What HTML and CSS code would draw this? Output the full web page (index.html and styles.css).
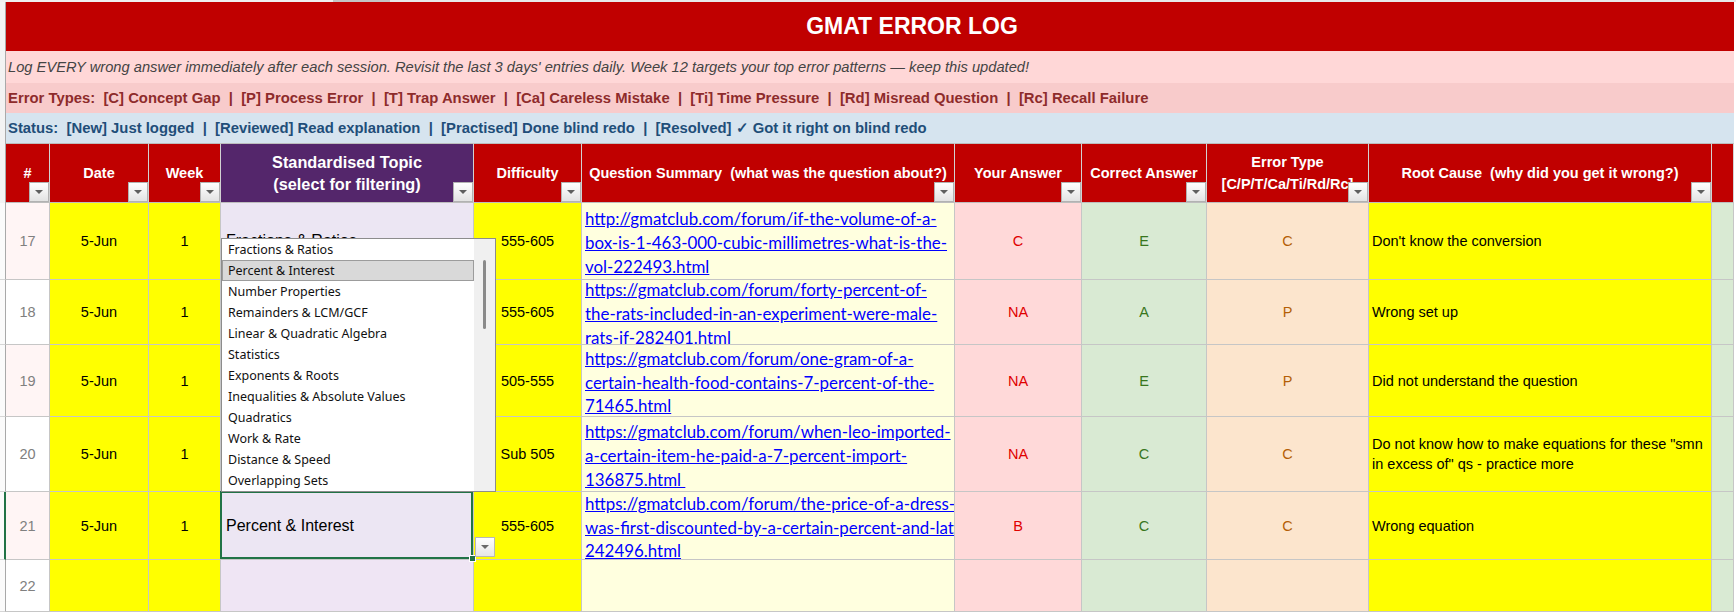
FILE: index.html
```html
<!DOCTYPE html>
<html lang="en">
<head>
<meta charset="utf-8">
<title>GMAT Error Log</title>
<link rel="stylesheet" href="styles.css">
</head>
<body>
<div class="ribbon-edge"></div>
<div class="sheet">
  <!-- banner rows -->
  <div class="gutter gutter-bands"></div>
  <div class="title">GMAT ERROR LOG</div>
  <div class="band band-note">Log EVERY wrong answer immediately after each session. Revisit the last 3 days' entries daily. Week 12 targets your top error patterns — keep this updated!</div>
  <div class="band band-types">Error Types:  [C] Concept Gap  |  [P] Process Error  |  [T] Trap Answer  |  [Ca] Careless Mistake  |  [Ti] Time Pressure  |  [Rd] Misread Question  |  [Rc] Recall Failure</div>
  <div class="band band-status">Status:  [New] Just logged  |  [Reviewed] Read explanation  |  [Practised] Done blind redo  |  [Resolved] ✓ Got it right on blind redo</div>

  <!-- column headers -->
  <div class="gutter"></div>
  <div class="th">#<span class="filter"></span></div>
  <div class="th">Date<span class="filter"></span></div>
  <div class="th">Week<span class="filter"></span></div>
  <div class="th th-topic">Standardised Topic<br>(select for filtering)<span class="filter"></span></div>
  <div class="th">Difficulty<span class="filter"></span></div>
  <div class="th">Question Summary  (what was the question about?)<span class="filter"></span></div>
  <div class="th">Your Answer<span class="filter"></span></div>
  <div class="th">Correct Answer<span class="filter"></span></div>
  <div class="th">Error Type<br>[C/P/T/Ca/Ti/Rd/Rc]<span class="filter"></span></div>
  <div class="th">Root Cause  (why did you get it wrong?)<span class="filter"></span></div>
  <div class="th"></div>

  <!-- row 17 -->
  <div class="gutter gutter-row"></div>
  <div class="td num num-alt">17</div>
  <div class="td yel">5-Jun</div>
  <div class="td yel">1</div>
  <div class="td topic">Fractions &amp; Ratios</div>
  <div class="td yel">555-605</div>
  <div class="td link"><a href="#">http://gmatclub.com/forum/if-the-volume-of-a-<br>box-is-1-463-000-cubic-millimetres-what-is-the-<br>vol-222493.html</a></div>
  <div class="td mine">C</div>
  <div class="td right">E</div>
  <div class="td etype">C</div>
  <div class="td cause">Don't know the conversion</div>
  <div class="td pad"></div>

  <!-- row 18 -->
  <div class="gutter gutter-row"></div>
  <div class="td num">18</div>
  <div class="td yel">5-Jun</div>
  <div class="td yel">1</div>
  <div class="td topic"></div>
  <div class="td yel">555-605</div>
  <div class="td link"><a href="#">https://gmatclub.com/forum/forty-percent-of-<br>the-rats-included-in-an-experiment-were-male-<br>rats-if-282401.html</a></div>
  <div class="td mine">NA</div>
  <div class="td right">A</div>
  <div class="td etype">P</div>
  <div class="td cause">Wrong set up</div>
  <div class="td pad"></div>

  <!-- row 19 -->
  <div class="gutter gutter-row"></div>
  <div class="td num num-alt">19</div>
  <div class="td yel">5-Jun</div>
  <div class="td yel">1</div>
  <div class="td topic"></div>
  <div class="td yel">505-555</div>
  <div class="td link"><a href="#">https://gmatclub.com/forum/one-gram-of-a-<br>certain-health-food-contains-7-percent-of-the-<br>71465.html</a></div>
  <div class="td mine">NA</div>
  <div class="td right">E</div>
  <div class="td etype">P</div>
  <div class="td cause">Did not understand the question</div>
  <div class="td pad"></div>

  <!-- row 20 -->
  <div class="gutter gutter-row"></div>
  <div class="td num">20</div>
  <div class="td yel">5-Jun</div>
  <div class="td yel">1</div>
  <div class="td topic"></div>
  <div class="td yel">Sub 505</div>
  <div class="td link"><a href="#">https://gmatclub.com/forum/when-leo-imported-<br>a-certain-item-he-paid-a-7-percent-import-<br>136875.html&nbsp;</a></div>
  <div class="td mine">NA</div>
  <div class="td right">C</div>
  <div class="td etype">C</div>
  <div class="td cause">Do not know how to make equations for these "smn<br>in excess of" qs - practice more</div>
  <div class="td pad"></div>

  <!-- row 21 (active cell with its validation list open) -->
  <div class="gutter gutter-row gutter-active"></div>
  <div class="td num num-alt">21</div>
  <div class="td yel">5-Jun</div>
  <div class="td yel">1</div>
  <div class="td topic is-selected">Percent &amp; Interest
    <div class="dv-list">
      <div class="dv-items">
        <div class="dv-item">Fractions &amp; Ratios</div>
        <div class="dv-item is-active">Percent &amp; Interest</div>
        <div class="dv-item">Number Properties</div>
        <div class="dv-item">Remainders &amp; LCM/GCF</div>
        <div class="dv-item">Linear &amp; Quadratic Algebra</div>
        <div class="dv-item">Statistics</div>
        <div class="dv-item">Exponents &amp; Roots</div>
        <div class="dv-item">Inequalities &amp; Absolute Values</div>
        <div class="dv-item">Quadratics</div>
        <div class="dv-item">Work &amp; Rate</div>
        <div class="dv-item">Distance &amp; Speed</div>
        <div class="dv-item">Overlapping Sets</div>
      </div>
      <div class="dv-scroll"><div class="dv-thumb"></div></div>
    </div>
    <span class="sel-box"><span class="fill-handle"></span></span>
    <span class="dv-button"></span>
  </div>
  <div class="td yel">555-605</div>
  <div class="td link"><a href="#">https://gmatclub.com/forum/the-price-of-a-dress-<br>was-first-discounted-by-a-certain-percent-and-lat-<br>242496.html</a></div>
  <div class="td mine">B</div>
  <div class="td right">C</div>
  <div class="td etype">C</div>
  <div class="td cause">Wrong equation</div>
  <div class="td pad"></div>

  <!-- row 22 -->
  <div class="gutter gutter-row"></div>
  <div class="td num">22</div>
  <div class="td yel"></div>
  <div class="td yel"></div>
  <div class="td topic topic-empty"></div>
  <div class="td yel"></div>
  <div class="td link"></div>
  <div class="td mine"></div>
  <div class="td right"></div>
  <div class="td etype"></div>
  <div class="td cause"></div>
  <div class="td pad"></div>
</div>
</body>
</html>
```

FILE: styles.css
```css
* { box-sizing: border-box; margin: 0; padding: 0; }

html, body { background: #ffffff; }

body {
  width: 1736px;
  height: 612px;
  overflow: hidden;
  font-family: "Liberation Sans", Arial, sans-serif;
  font-size: 14.5px;
  color: #000000;
}

/* strip of the window chrome above the grid */
.ribbon-edge {
  height: 2px;
  background: linear-gradient(to right, #efefef 0, #efefef 333px, #c4c4c4 333px, #c4c4c4 390px, #e8e8e8 390px);
}

/* worksheet grid: row-header edge + 11 columns */
.sheet {
  display: grid;
  width: 1734px;
  grid-template-columns: 6px 44px 99px 72px 253px 108px 373px 127px 125px 162px 343px 22px;
  grid-template-rows: 49px 32px 30px 30px 60px 77px 65px 72px 75px 68px 52px;
}

.gutter {
  background: #f3f3f3;
  border-right: 1px solid #a9a9a9;
}

.gutter-bands {
  grid-column: 1;
  grid-row: 1 / span 4;
}

.gutter-row {
  background: #fbfbfb;
  border-bottom: 1px solid #d6d6d6;
}

.gutter-active {
  border-right: 2px solid #217346;
}

/* banner rows */
.title {
  grid-column: 2 / -1;
  background: #c00000;
  color: #ffffff;
  font-weight: bold;
  font-size: 23px;
  display: flex;
  align-items: center;
  justify-content: center;
  padding-left: 84px;
}

.band {
  grid-column: 2 / -1;
  display: flex;
  align-items: center;
  padding-left: 2px;
  white-space: pre;
  font-size: 14.85px;
}

.band-note {
  background: #ffd7d7;
  color: #444444;
  font-style: italic;
  font-size: 14.7px;
}

.band-types {
  background: #f8cbcb;
  color: #8e2b2b;
  font-weight: bold;
}

.band-status {
  background: #d6e4ef;
  color: #1f4e79;
  font-weight: bold;
}

/* header cells */
.th {
  position: relative;
  display: flex;
  align-items: center;
  justify-content: center;
  background: #c00000;
  color: #ffffff;
  font-weight: bold;
  line-height: 22px;
  text-align: center;
  white-space: pre;
  border-top: 1px solid #bdbdbd;
  border-bottom: 1px solid #bdbdbd;
  border-right: 1px solid #d2d2d2;
}

.th-topic {
  background: #54266b;
  font-size: 16.3px;
}

.filter {
  position: absolute;
  right: 0;
  bottom: 0;
  width: 20px;
  height: 20px;
  border: 1px solid #b2b2b2;
  background: linear-gradient(#ffffff, #e3e3e3);
}

.filter::after {
  content: "";
  position: absolute;
  left: 5px;
  top: 7px;
  border-left: 4px solid transparent;
  border-right: 4px solid transparent;
  border-top: 4px solid #5f5f5f;
}

/* data cells */
.td {
  display: flex;
  align-items: center;
  justify-content: center;
  overflow: hidden;
  white-space: nowrap;
  border-right: 1px solid #c6c6c6;
  border-bottom: 1px solid #c6c6c6;
}

.num { color: #808080; background: #ffffff; }
.num-alt { background: #fff5f5; }
.yel { background: #ffff00; }

.topic {
  background: #ece6f3;
  justify-content: flex-start;
  padding-left: 5px;
  font-size: 16px;
  overflow: visible;
}

.topic-empty { background: #efe5f4; }

.link {
  background: #ffffdf;
  justify-content: flex-start;
  padding: 4px 0 0 3px;
}

.link a {
  font-family: Lato, "Liberation Sans", sans-serif;
  font-size: 16.9px;
  line-height: 23.7px;
  color: #0000ff;
  text-decoration: underline;
}

.mine { background: #ffd9d9; color: #e00000; }
.right { background: #d9ead3; color: #38761d; }
.etype { background: #fce5cd; color: #b45f06; }

.cause {
  background: #ffff00;
  justify-content: flex-start;
  padding-left: 3px;
  line-height: 20px;
  white-space: normal;
}

.pad { background: #d9ead3; }

/* active cell and its in-cell dropdown */
.is-selected { position: relative; }

.sel-box {
  position: absolute;
  left: -1px;
  top: -1px;
  right: 0;
  bottom: 0;
  border: 2px solid #217346;
  pointer-events: none;
}

.fill-handle {
  position: absolute;
  right: -5px;
  bottom: -5px;
  width: 7px;
  height: 7px;
  background: #217346;
  border: 1px solid #ffffff;
}

.dv-button {
  position: absolute;
  left: calc(100% + 2px);
  top: 45px;
  width: 20px;
  height: 20px;
  border: 1px solid #b8b8b8;
  background: linear-gradient(#ffffff, #e6e6e6);
}

.dv-button::after {
  content: "";
  position: absolute;
  left: 5px;
  top: 7px;
  border-left: 4px solid transparent;
  border-right: 4px solid transparent;
  border-top: 4px solid #6a6a6a;
}

.dv-list {
  position: absolute;
  left: 0;
  bottom: 100%;
  z-index: 5;
  display: flex;
  width: 275px;
  height: 254px;
  background: #ffffff;
  border: 1px solid #8c8c8c;
  font-family: "Noto Sans", "Liberation Sans", sans-serif;
  font-size: 12.5px;
  color: #111111;
}

.dv-items { width: 252px; }

.dv-item {
  height: 21px;
  line-height: 21px;
  padding-left: 6px;
  white-space: nowrap;
}

.dv-item.is-active {
  background: #d9d9d9;
  box-shadow: inset 0 0 0 1px #9c9c9c;
}

.dv-scroll {
  flex: 1;
  background: #f0f0f0;
  padding: 21px 0 0 9px;
}

.dv-thumb {
  width: 3px;
  height: 69px;
  background: #8a8a8a;
  border-radius: 2px;
}
```
